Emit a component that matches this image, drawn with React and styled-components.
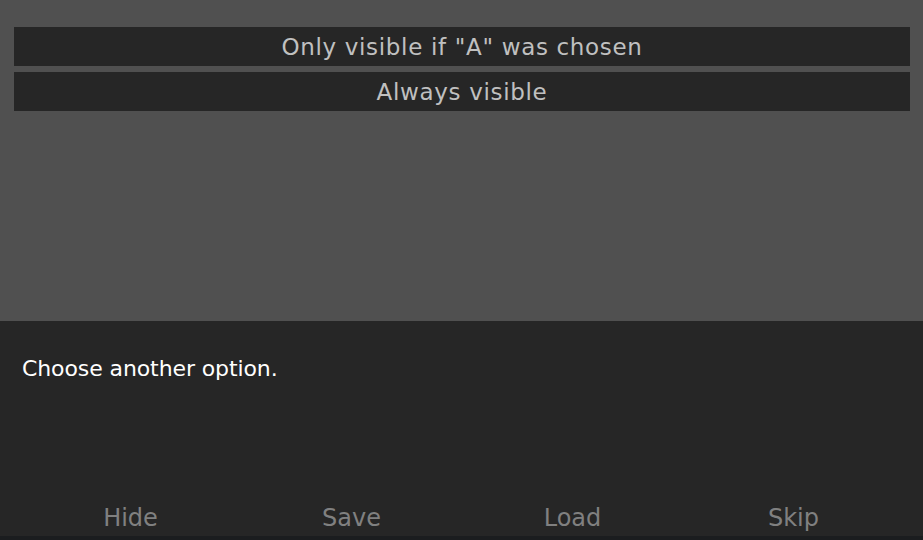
import React from "react";
import styled, { createGlobalStyle } from "styled-components";

const Global = createGlobalStyle`
  html, body { margin: 0; padding: 0; background: #505050; }
  body { font-family: "DejaVu Sans", sans-serif; }
`;

const Screen = styled.div`
  width: 923px;
  height: 540px;
  display: flex;
  flex-direction: column;
  background: #505050;
  overflow: hidden;
`;

const Choices = styled.div`
  flex: 1;
  display: flex;
  flex-direction: column;
  gap: 6px;
  padding: 27px 13px 0 14px;
`;

const Choice = styled.button`
  height: 39px;
  border: none;
  background: #262626;
  color: #c0c0c0;
  font-family: "DejaVu Sans", sans-serif;
  font-size: 23px;
  letter-spacing: 0.67px;
  padding: 0;
  cursor: pointer;
`;

const Textbox = styled.div`
  height: 215px;
  background: #262626;
  display: flex;
  flex-direction: column;
  border-bottom: 4px solid #1b1d1f;
`;

const Say = styled.p`
  margin: 0;
  padding: 35px 22px 0;
  flex: 1;
  color: #ffffff;
  font-size: 22px;
  letter-spacing: -0.1px;
`;

const Menu = styled.div`
  display: grid;
  grid-template-columns: repeat(4, 1fr);
  padding: 0 19px 4px 20px;
`;

const MenuItem = styled.span`
  text-align: center;
  color: #808080;
  font-family: "DejaVu Sans", sans-serif;
  font-size: 24px;
`;

export default function App() {
  return (
    <Screen>
      <Global />
      <Choices>
        <Choice>Only visible if "A" was chosen</Choice>
        <Choice>Always visible</Choice>
      </Choices>
      <Textbox>
        <Say>Choose another option.</Say>
        <Menu>
          {["Hide", "Save", "Load", "Skip"].map((t) => (
            <MenuItem key={t}>{t}</MenuItem>
          ))}
        </Menu>
      </Textbox>
    </Screen>
  );
}
